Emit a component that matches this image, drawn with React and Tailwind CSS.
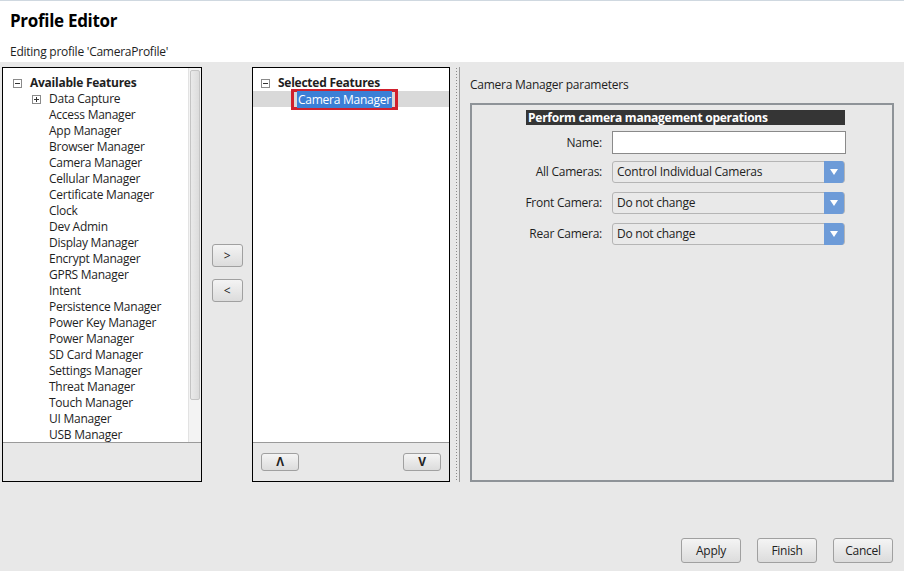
import { useState } from 'react';

const features = [
    'Access Manager',
    'App Manager',
    'Browser Manager',
    'Camera Manager',
    'Cellular Manager',
    'Certificate Manager',
    'Clock',
    'Dev Admin',
    'Display Manager',
    'Encrypt Manager',
    'GPRS Manager',
    'Intent',
    'Persistence Manager',
    'Power Key Manager',
    'Power Manager',
    'SD Card Manager',
    'Settings Manager',
    'Threat Manager',
    'Touch Manager',
    'UI Manager',
    'USB Manager',
];

function TreeBox({ plus }) {
    return (
        <span className="relative inline-block h-[9px] w-[9px] border border-[#8a8a8a] bg-white">
            <span className="absolute left-[1px] top-[3px] h-px w-[5px] bg-[#333]" />
            {plus && <span className="absolute left-[3px] top-[1px] h-[5px] w-px bg-[#333]" />}
        </span>
    );
}

function WinButton({ children, className = '' }) {
    return (
        <button
            className={
                'flex items-center justify-center rounded-[3px] border border-[#a0a0a0] bg-gradient-to-b from-[#f4f4f4] to-[#dcdcdc] text-[12px] text-[#222] ' +
                className
            }
        >
            {children}
        </button>
    );
}

function Select({ value }) {
    return (
        <div className="flex h-[22px] w-[233px] items-center rounded-[3px] border border-[#b5b5b5] bg-[#e9e9e9]">
            <span className="flex-1 pl-[4px] text-[12px] text-[#222]">{value}</span>
            <span className="flex h-[22px] w-[20px] items-center justify-center rounded-r-[3px] bg-[#6d9bd8]">
                <svg width="8" height="6" viewBox="0 0 8 6">
                    <path d="M0 0 L8 0 L4 6 Z" fill="#fff" />
                </svg>
            </span>
        </div>
    );
}

export default function App() {
    const [name, setName] = useState('');

    return (
        <div
            className="flex h-[571px] w-[904px] flex-col bg-[#e8e8e8] text-[12px] tracking-[-0.25px] text-[#1e1e1e]"
            style={{ fontFamily: '"Open Sans", "Noto Sans", sans-serif' }}
        >
            {/* header */}
            <div className="h-[62px] border-t border-[#cfd8e0] bg-white px-[10px]">
                <h1 className="mt-[8px] text-[17px] font-bold leading-[24px] tracking-[-0.3px] text-black">Profile Editor</h1>
                <div className="mt-[11px] text-[12px] leading-[16px]">Editing profile 'CameraProfile'</div>
            </div>

            <div className="mt-[5px] flex h-[415px]">
                {/* available features */}
                <div className="ml-[2px] flex w-[200px] flex-col border border-black">
                    <div className="flex h-[375px] border-b border-[#9a9a9a] bg-white">
                        <div className="flex-1 overflow-hidden pt-[7px]">
                            <div className="flex h-[16px] items-center pl-[10px]">
                                <TreeBox />
                                <span className="ml-[8px] font-bold">Available Features</span>
                            </div>
                            <div className="flex h-[16px] items-center pl-[29px]">
                                <TreeBox plus />
                                <span className="ml-[8px]">Data Capture</span>
                            </div>
                            {features.map((f) => (
                                <div key={f} className="flex h-[16px] items-center pl-[46px] whitespace-nowrap">
                                    {f}
                                </div>
                            ))}
                        </div>
                        <div className="w-[13px] border-l border-[#e2e2e2] bg-[#f3f3f3] px-[1px] pt-[2px]">
                            <div className="h-[330px] rounded-[2px] border border-[#c4c4c4] bg-gradient-to-r from-[#eaeaea] to-[#dcdcdc]" />
                        </div>
                    </div>
                    <div className="flex-1 bg-[#e8e8e8]" />
                </div>

                {/* move buttons */}
                <div className="flex w-[50px] flex-col items-center pt-[177px]">
                    <WinButton className="h-[23px] w-[31px]">&gt;</WinButton>
                    <WinButton className="mt-[12px] h-[23px] w-[31px]">&lt;</WinButton>
                </div>

                {/* selected features */}
                <div className="flex w-[198px] flex-col border border-black">
                    <div className="h-[375px] border-b border-[#9a9a9a] bg-white pt-[7px]">
                        <div className="flex h-[16px] items-center pl-[8px]">
                            <TreeBox />
                            <span className="ml-[8px] font-bold">Selected Features</span>
                        </div>
                        <div className="flex h-[16px] items-center bg-[#d9d9d9] pl-[38px]">
                            <span className="border-[3px] border-[#d0202d] px-[3px] leading-[15px]">
                                <span className="bg-[#3b7fd6] px-[1px] text-white">Camera Manager</span>
                            </span>
                        </div>
                    </div>
                    <div className="flex flex-1 items-start justify-between px-[8px] pt-[10px]">
                        <WinButton className="h-[18px] w-[38px] text-[11px] font-bold">&#923;</WinButton>
                        <WinButton className="h-[18px] w-[38px] text-[11px] font-bold">V</WinButton>
                    </div>
                </div>

                {/* splitter */}
                <div className="ml-[5px] w-[5px] border-r border-[#9a9a9a] bg-[radial-gradient(#8a8a8a_0.8px,transparent_0.8px)] bg-[length:3px_3px]" />

                {/* parameters */}
                <div className="flex flex-1 flex-col pl-[10px] pr-[10px]">
                    <div className="mt-[10px] h-[16px] leading-[16px]">Camera Manager parameters</div>
                    <div className="mt-[10px] flex-1 border-2 border-[#8e9398] pt-[5px]">
                        <div className="ml-[54px] w-[319px] bg-[#353535] pl-[2px] text-[12px] font-bold leading-[15px] text-white">
                            Perform camera management operations
                        </div>
                        <div className="mt-[6px] flex flex-col">
                            <div className="flex items-center">
                                <span className="w-[130px] text-right">Name:</span>
                                <input
                                    value={name}
                                    onChange={(e) => setName(e.target.value)}
                                    className="ml-[10px] h-[23px] w-[234px] border border-[#8a8a8a] bg-white outline-none"
                                />
                            </div>
                            <div className="mt-[7px] flex items-center">
                                <span className="w-[130px] text-right">All Cameras:</span>
                                <div className="ml-[10px]">
                                    <Select value="Control Individual Cameras" />
                                </div>
                            </div>
                            <div className="mt-[9px] flex items-center">
                                <span className="w-[130px] text-right">Front Camera:</span>
                                <div className="ml-[10px]">
                                    <Select value="Do not change" />
                                </div>
                            </div>
                            <div className="mt-[9px] flex items-center">
                                <span className="w-[130px] text-right">Rear Camera:</span>
                                <div className="ml-[10px]">
                                    <Select value="Do not change" />
                                </div>
                            </div>
                        </div>
                    </div>
                </div>
            </div>

            {/* footer */}
            <div className="mt-[56px] flex justify-end gap-[16px] pr-[11px]">
                <WinButton className="h-[25px] w-[60px]">Apply</WinButton>
                <WinButton className="h-[25px] w-[60px]">Finish</WinButton>
                <WinButton className="h-[25px] w-[60px]">Cancel</WinButton>
            </div>
        </div>
    );
}
